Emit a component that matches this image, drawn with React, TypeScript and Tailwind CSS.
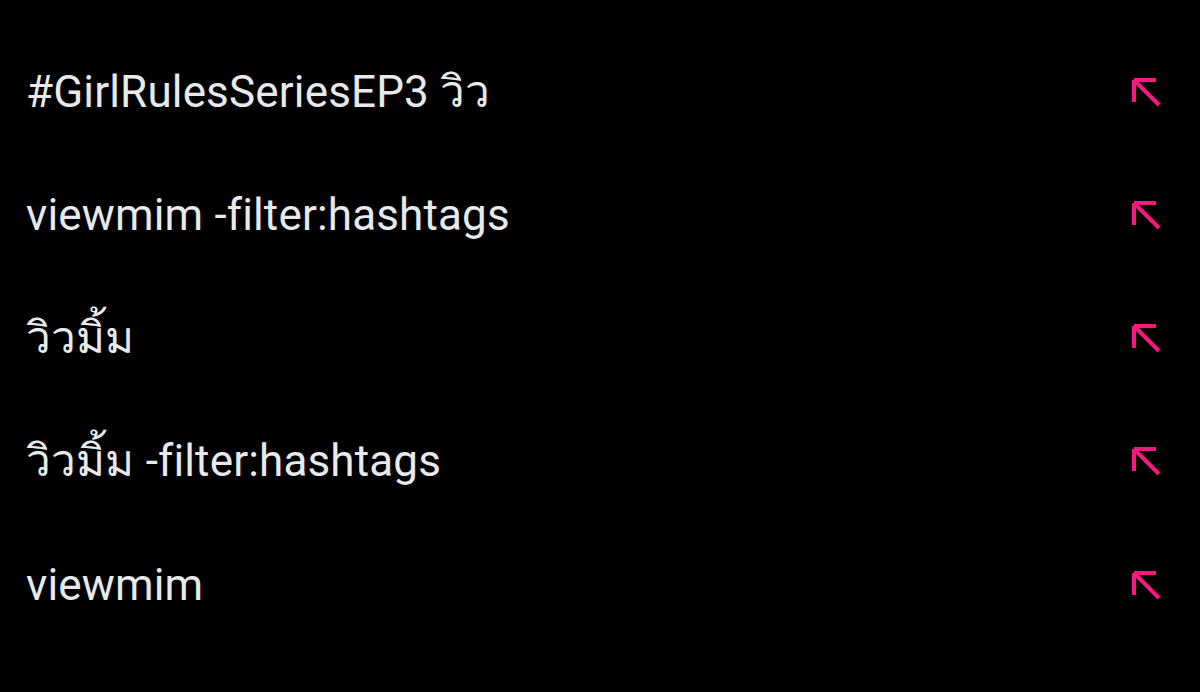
import React from "react";

const items = [
  "#GirlRulesSeriesEP3 วิว",
  "viewmim -filter:hashtags",
  "วิวมิ้ม",
  "วิวมิ้ม -filter:hashtags",
  "viewmim",
];

function Arrow() {
  return (
    <svg width="32" height="32" viewBox="0 0 32 32" fill="none" aria-hidden>
      <path
        d="M4 4 L29 29 M4 4 H26 M4 4 V26"
        stroke="#f91880"
        strokeWidth="4"
        strokeLinecap="butt"
        strokeLinejoin="miter"
      />
    </svg>
  );
}

export default function App() {
  return (
    <div className="w-[1200px] h-[692px] bg-black pt-[30px] overflow-hidden" style={{ fontFamily: "Roboto, 'Noto Sans', sans-serif" }}>
      {items.map((t, i) => (
        <div key={i} className="h-[123.25px] flex items-center justify-between pl-[26px] pr-[38px]">
          <span className="text-[44px] leading-none text-[#e7e9ea] [font-variant-ligatures:none] tracking-[0.15px]">{t}</span>
          <Arrow />
        </div>
      ))}
    </div>
  );
}
